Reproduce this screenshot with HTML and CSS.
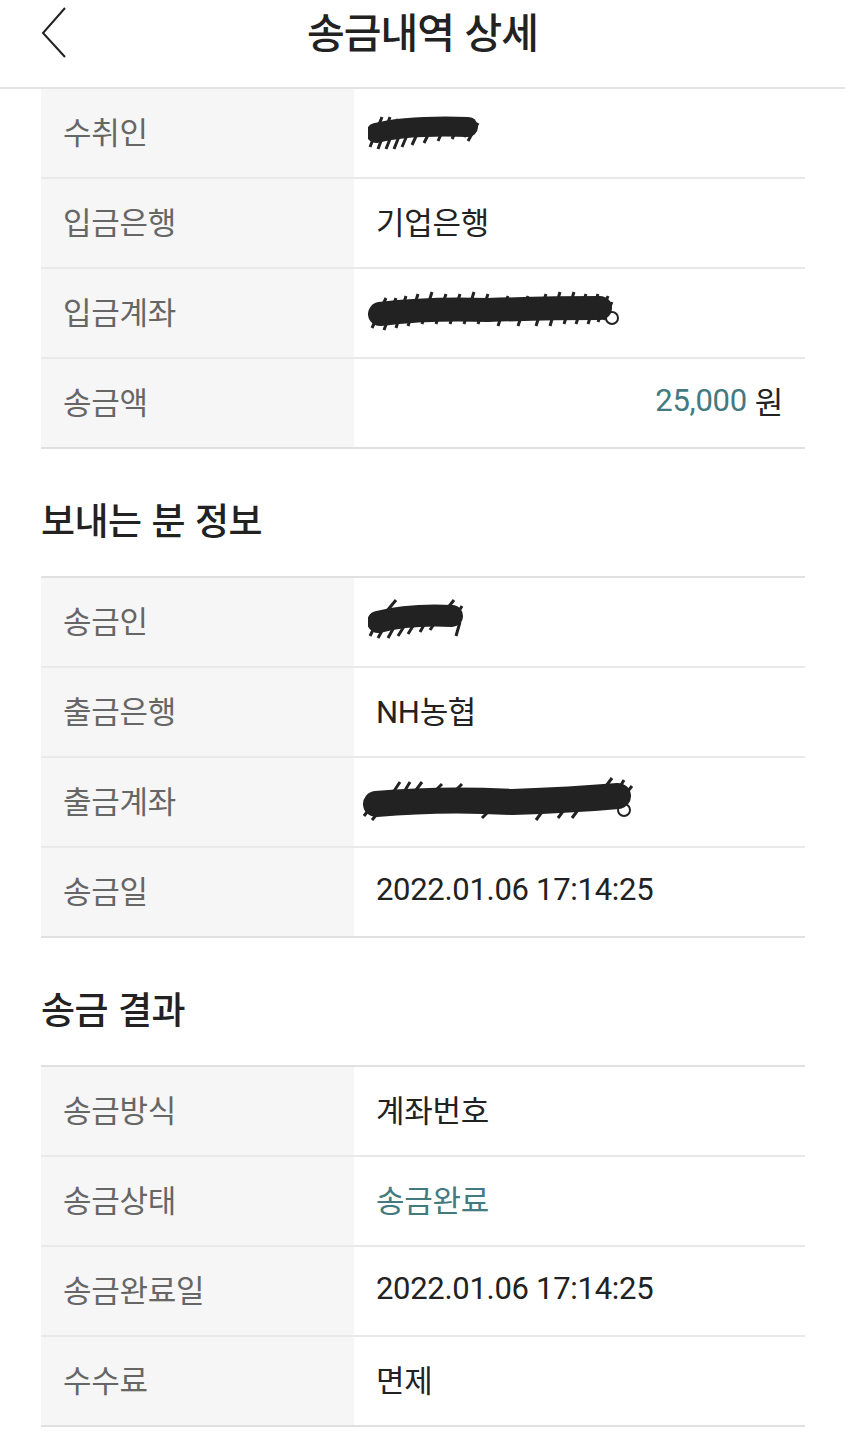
FILE: index.html
```html
<!DOCTYPE html>
<html lang="ko">
<head>
<meta charset="utf-8">
<link rel="stylesheet" href="styles.css">
</head>
<body>
	<!--Top bar-->
	<div class="topbar">
		<svg class="back" width="30" height="52" viewBox="0 0 30 52">
			<path d="M25 2 L3 27 L25 51" fill="none" stroke="#222" stroke-width="2"/>
		</svg>
		<div class="title">송금내역 상세</div>
	</div>

	<div class="content">
		<!--Receiver-->
		<div class="table first">
			<div class="row">
				<div class="label">수취인</div>
				<div class="value">
					<svg class="scribble" width="112" height="40" viewBox="0 0 112 40">
						<path d="M8 22 Q40 14 100 16" stroke="#222" stroke-width="20" fill="none" stroke-linecap="round"/>
						<path d="M2 36 L14 6 M10 38 L22 6 M18 38 L30 8 M26 38 L38 8 M34 36 L46 8 M44 34 L56 8 M56 32 L68 8 M70 30 L80 8 M84 28 L94 8 M96 26 L106 8 M100 30 L110 12" stroke="#222" stroke-width="3" fill="none"/>
					</svg>
				</div>
			</div>
			<div class="row">
				<div class="label">입금은행</div>
				<div class="value">기업은행</div>
			</div>
			<div class="row">
				<div class="label">입금계좌</div>
				<div class="value">
					<svg class="scribble" width="252" height="50" viewBox="0 0 252 50">
						<path d="M12 28 Q60 22 120 24 Q180 22 232 22" stroke="#222" stroke-width="24" fill="none" stroke-linecap="round"/>
						<path d="M4 42 L18 12 M16 44 L28 12 M28 42 L38 10 M40 40 L50 8 M54 38 L64 6 M68 38 L78 8 M82 38 L92 8 M96 38 L106 6 M110 38 L120 8 M130 40 L140 10 M150 40 L160 10 M168 40 L178 8 M182 40 L192 6 M196 38 L206 6 M208 38 L218 8 M220 38 L230 8 M230 36 L240 10 M236 34 L244 16" stroke="#222" stroke-width="3" fill="none"/>
						<circle cx="244" cy="32" r="6" stroke="#222" stroke-width="2" fill="none"/>
					</svg>
				</div>
			</div>
			<div class="row">
				<div class="label">송금액</div>
				<div class="value amount"><span class="accent">25,000</span> 원</div>
			</div>
		</div>

		<!--Sender-->
		<h2 class="section">보내는 분 정보</h2>
		<div class="table">
			<div class="row">
				<div class="label">송금인</div>
				<div class="value">
					<svg class="scribble" width="96" height="44" viewBox="0 0 96 44">
						<path d="M10 24 Q40 16 84 18" stroke="#222" stroke-width="22" fill="none" stroke-linecap="round"/>
						<path d="M2 38 L12 18 M10 40 L20 22 M20 40 L30 22 M30 38 L40 22 M40 36 L50 20 M52 34 L60 20 M62 32 L70 20 M18 14 L28 2 M78 12 L86 2 M88 18 L94 8 M92 24 L88 38" stroke="#222" stroke-width="3" fill="none"/>
					</svg>
				</div>
			</div>
			<div class="row">
				<div class="label">출금은행</div>
				<div class="value">NH농협</div>
			</div>
			<div class="row">
				<div class="label">출금계좌</div>
				<div class="value">
					<svg class="scribble low" width="274" height="52" viewBox="0 0 274 52">
						<path d="M14 30 Q80 24 150 28 Q210 26 256 22" stroke="#222" stroke-width="26" fill="none" stroke-linecap="round"/>
						<path d="M2 42 L14 26 M10 46 L22 32 M30 20 L38 8 M42 18 L48 8 M54 16 L60 8 M74 16 L80 10 M94 16 L100 10 M120 44 L126 38 M174 46 L180 38 M196 44 L202 36 M210 44 L216 36 M244 12 L250 4 M256 16 L262 6 M262 22 L270 12" stroke="#222" stroke-width="3" fill="none"/>
						<circle cx="262" cy="36" r="6" stroke="#222" stroke-width="2" fill="none"/>
					</svg>
				</div>
			</div>
			<div class="row">
				<div class="label">송금일</div>
				<div class="value">2022.01.06 17:14:25</div>
			</div>
		</div>

		<!--Result-->
		<h2 class="section">송금 결과</h2>
		<div class="table">
			<div class="row">
				<div class="label">송금방식</div>
				<div class="value">계좌번호</div>
			</div>
			<div class="row">
				<div class="label">송금상태</div>
				<div class="value accent">송금완료</div>
			</div>
			<div class="row">
				<div class="label">송금완료일</div>
				<div class="value">2022.01.06 17:14:25</div>
			</div>
			<div class="row">
				<div class="label">수수료</div>
				<div class="value">면제</div>
			</div>
		</div>
	</div>
</body>
</html>
```

FILE: styles.css
```css
body {
    margin: 0;
    background-color: #fff;
    font-family: "Roboto", "Noto Sans CJK KR", sans-serif;
    color: #222;
}

/* Top bar */
.topbar {
    height: 87px;
    border-bottom: 2px solid #e3e3e3;
    display: flex;
    align-items: flex-start;
    justify-content: center;
    position: relative;
}
.back {
    position: absolute;
    left: 40px;
    top: 6px;
}
.title {
    font-family: "Noto Sans CJK KR", sans-serif;
    font-size: 41px;
    font-weight: 500;
    line-height: 60px;
    letter-spacing: -1px;
}

/* Content */
.content {
    padding: 0 40px 0 41px;
}
.table {
    border-top: 2px solid #e0e0e0;
}
.table.first {
    border-top: none;
}
.row {
    display: flex;
    height: 88px;
    border-bottom: 2px solid #e9e9e9;
}
.row:last-child {
    border-bottom-color: #e0e0e0;
}
.label {
    width: 291px;
    padding-left: 22px;
    padding-bottom: 5px;
    background-color: #f6f6f6;
    color: #666;
    font-size: 31px;
    display: flex;
    align-items: center;
    letter-spacing: -0.3px;
}
.value {
    flex: 1;
    padding: 0 22px 5px 22px;
    font-size: 31px;
    display: flex;
    align-items: center;
    letter-spacing: -0.3px;
}
.amount {
    justify-content: flex-end;
}
.amount .accent {
    margin-right: 8px;
}
.accent {
    color: #437a80;
}
.scribble {
    margin-left: -8px;
}
.scribble.low {
    margin-left: -14px;
}

/* Section titles */
.section {
    font-family: "Noto Sans CJK KR", sans-serif;
    font-size: 37px;
    font-weight: 500;
    line-height: 40px;
    margin: 50px 0 37px 0;
    color: #222;
    letter-spacing: -0.5px;
}
```
